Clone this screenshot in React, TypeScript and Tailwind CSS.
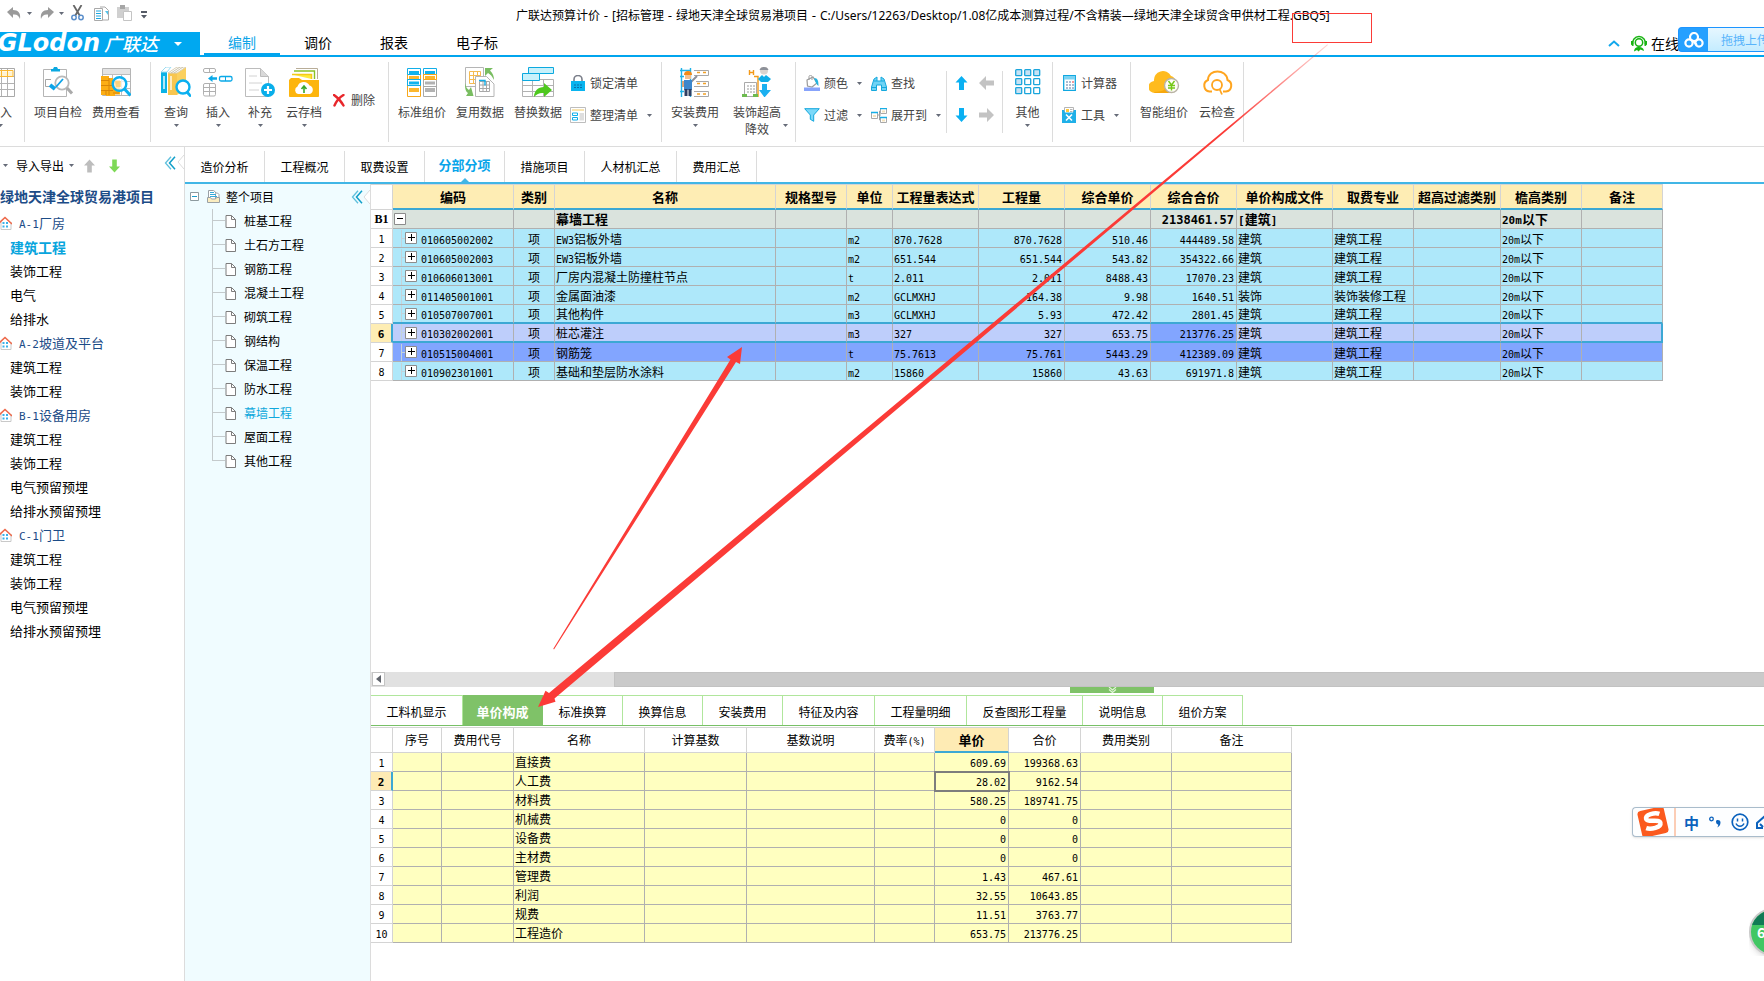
import React from "react";

const MONO = "font-['DejaVu_Sans_Mono',monospace]";

/* ---------- helpers ---------- */

/** Sets runs of Latin characters in a half-width face next to the Chinese text. */
function Mix({ text, size = "text-[10px]" }: { text: string; size?: string }) {
  return (
    <>
      {text.split(/([\x20-\x7e]+)/).map((part, i) =>
        part === "" ? null : i % 2 ? (
          <span key={i} className={`${MONO} ${size} leading-none`}>{part}</span>
        ) : (
          <React.Fragment key={i}>{part}</React.Fragment>
        )
      )}
    </>
  );
}

function Svg({ w = 30, h = 30, children }: { w?: number; h?: number; children: React.ReactNode }) {
  return (
    <svg width={w} height={h} viewBox={`0 0 ${w} ${h}`} fill="none" className="block shrink-0" aria-hidden="true">
      {children}
    </svg>
  );
}

const Caret = ({ color = "#666b78" }: { color?: string }) => (
  <Svg w={5} h={3}><path d="M0 0h5L2.500 3z" fill={color} /></Svg>
);

/* ---------- small icons ---------- */

const Undo = () => (
  <Svg w={14} h={13}><path d="M0 5L6 0v3c5 0 8 3 7 9-1-3-3-5-7-4.500V11z" fill="#9a9a9a" /></Svg>
);
const Redo = () => (
  <Svg w={14} h={13}><path d="M14 5L8 0v3C3 3 0 6 1 12c1-3 3-5 7-4.500V11z" fill="#9a9a9a" /></Svg>
);
const Scissors = () => (
  <Svg w={13} h={16}>
    <path d="M2.500 0L9 11M10.500 0L4 11" stroke="#666" strokeWidth="1.800" />
    <circle cx="3" cy="12.500" r="2.200" stroke="#5b8fcb" strokeWidth="1.500" />
    <circle cx="10" cy="12.500" r="2.200" stroke="#5b8fcb" strokeWidth="1.500" />
  </Svg>
);
const CopyIcon = () => (
  <Svg w={15} h={15}>
    <path d="M6 1h5l3.500 3.500V14H9" fill="#fff" stroke="#a9a9a9" />
    <path d="M11 5h3v4z" fill="#55c3ea" />
    <path d="M.5 2.500h8v12h-8z" fill="#fff" stroke="#a9a9a9" />
    <path d="M2 5h5M2 7.500h5M2 10h5M2 12.500h5" stroke="#1ea7e0" />
  </Svg>
);
const PasteIcon = () => (
  <Svg w={15} h={16}>
    <path d="M0 2h12v11H0z" fill="#d0d0d0" />
    <path d="M3 0h5v4H3z" fill="#a6a6a6" />
    <path d="M6.500 6.500h8v9h-8z" fill="#fff" stroke="#c4c4c4" />
  </Svg>
);
const MoreBar = () => (
  <Svg w={6} h={8}><path d="M0 0h6v2H0zM0 4h6L3 7.500z" fill="#555b66" /></Svg>
);
const DoubleLeft = () => (
  <Svg w={12} h={14}>
    <path d="M7 .8L1.500 7 7 13.200" stroke="#5fc0dd" strokeWidth="1.300" />
    <path d="M11 .8L5.500 7 11 13.200" stroke="#109fc9" strokeWidth="1.500" />
  </Svg>
);
const Notch = ({ fill }: { fill: string }) => (
  <Svg w={7} h={14}><path d="M7 0L1 7l6 7z" fill={fill} /><path d="M7 0L1 7l6 7" stroke="#dcdcdc" /></Svg>
);
const ArrowV = ({ color, down = false, w = 11 }: { color: string; down?: boolean; w?: number }) => (
  <svg width={w} height={14} viewBox="0 0 12 14" className={`block shrink-0 ${down ? "rotate-180" : ""}`} aria-hidden="true">
    <path d="M6 0l6 6.500H8.500V14h-5V6.500H0z" fill={color} />
  </svg>
);
const ArrowH = ({ right = false }: { right?: boolean }) => (
  <svg width={15} height={14} viewBox="0 0 15 14" className={`block shrink-0 ${right ? "rotate-180" : ""}`} aria-hidden="true">
    <path d="M0 7l7-7v4.500h8v5H7V14z" fill="#c3c3c3" />
  </svg>
);
const House = () => (
  <Svg w={12} h={14}>
    <path d="M1 6v7.500h10V6" stroke="#c9c9c9" fill="#fff" />
    <path d="M-2 8L5 1.500 12 8" stroke="#ee6a4b" strokeWidth="1.600" />
    <path d="M2.500 6h2v2h-2zM6 6h2v2H6zM2.500 9.500h2v2h-2zM6 9.500h2v2H6z" fill="#39b1ea" />
  </Svg>
);
const DocIcon = () => (
  <Svg w={11} h={13}><path d="M1 .5h5.500l4 4v8H1z" fill="#fff" stroke="#7d7d7d" /><path d="M6.500.5v4h4" stroke="#7d7d7d" /></Svg>
);
const ProjectDocs = () => (
  <Svg w={13} h={13}>
    <path d="M1.500 9V.5h5l2 1.500v7" fill="#fff" stroke="#9aa1a6" />
    <path d="M8 3h2.500l1.500 1.500V9" fill="#fff" stroke="#9aa1a6" />
    <path d="M3 2.500h4M3 4.500h6M3 6.500h7" stroke="#35a9d9" />
    <path d="M.5 7.500h3l1 1.500h4l1-1.500h3v5H.5z" fill="#fbedc0" stroke="#9aa1a6" />
  </Svg>
);

const LockIcon = () => (
  <Svg w={16} h={16}>
    <path d="M4 7V4.500a4 4 0 018 0V7" stroke="#7b7f8a" strokeWidth="1.600" />
    <path d="M1 6h14v10H1z" fill="#09b4ef" />
    <path d="M4 10h2M7 10h2M10 10h2M4 12.500h2M7 12.500h2M10 12.500h2" stroke="#0b6ea8" />
  </Svg>
);
const ArrangeIcon = () => (
  <Svg w={16} h={16}>
    <path d="M.5.5h15v15H.5z" fill="#fff" stroke="#bdbdbd" />
    <path d="M2 2h12v2H2z" fill="#f7e3b0" />
    <path d="M2.500 6h5v2.500h-5zM2.500 10.500h5V13h-5z" stroke="#0eaeea" />
    <path d="M9.500 6H14v7.500H9.500z" fill="#dedede" />
  </Svg>
);
const ColorIcon = () => (
  <Svg w={16} h={16}>
    <path d="M3 5l6-3 4 6-5 4-4.500-1z" fill="#fff" stroke="#9b9b9b" strokeWidth="1.200" />
    <path d="M5 5V1.500c0-1.500 3-1.500 3 0V5" stroke="#9b9b9b" />
    <path d="M10 3c4 0 4.500 3 4.500 8-2-1-2-3-3-4z" fill="#24b3df" />
    <path d="M0 12.500h16V16H0z" fill="#87a3fb" />
  </Svg>
);
const FindIcon = () => (
  <Svg w={16} h={15}>
    <path d="M3 3l3-2v4h4V1l3 2 2.500 8v3.500h-5V9h-5v5.500h-5V11z" fill="#6fd3f5" stroke="#15a8dd" />
    <path d="M1 11.500h4M11 11.500h4M3 5h3M10 5h3" stroke="#15a8dd" />
  </Svg>
);
const FilterIcon = () => (
  <Svg w={16} h={14}><path d="M.7.7h14.600L9.700 7v6.300l-3.400-2V7z" fill="#7cd8f8" stroke="#12a7dd" /></Svg>
);
const ExpandIcon = () => (
  <Svg w={16} h={15}>
    <path d="M7 7h3M8.500 3v9M8.500 3H10M8.500 12H10" stroke="#a0a0a0" />
    <path d="M.5 4.500h6v6h-6zM9.500.5h6v5h-6zM9.500 9.500h6v5h-6z" fill="#fff" stroke="#a9a9a9" />
    <path d="M0 4.500h7M9 .5h7M9 9.500h7" stroke="#16aee6" strokeWidth="1.500" />
    <path d="M2 7h3v2H2zM11 2.500h3v2h-3zM11 11.500h3v2h-3z" fill="#f4e2bd" />
  </Svg>
);
const CalcIcon = () => (
  <Svg w={13} h={16}>
    <path d="M.7.7h11.600v14.600H.7z" fill="#fff" stroke="#0fa7e0" strokeWidth="1.300" />
    <path d="M1 1h11v3.500H1z" fill="#7bd3f3" />
    <path d="M3 7h2M6 7h2M3 10h2M6 10h2M9 10h2M3 13h2M6 13h2M9 13h2" stroke="#5578a8" />
    <path d="M9 7h2" stroke="#e33" />
  </Svg>
);
const ToolIcon = () => (
  <Svg w={14} h={16}>
    <path d="M2.500 5V.5h9V5" fill="#fff" stroke="#b5b5b5" />
    <path d="M4 2h3v3H4z" fill="#ffc93c" />
    <path d="M8 2.500h2.500M8 4.500h2.500" stroke="#b5b5b5" />
    <path d="M0 3h2l1 2.500h8L12 3h2v13H0z" fill="#1fb0e8" />
    <path d="M4 7.500l6 6M10 7.500l-6 6" stroke="#fff" strokeWidth="1.600" />
  </Svg>
);
const DeleteIcon = () => (
  <Svg w={12} h={13}><path d="M1 1c3 2 7 6 9.500 10.500M10.500 1C7 3 3.500 7 1.500 11.500" stroke="#e8262b" strokeWidth="2.400" strokeLinecap="round" /></Svg>
);
const Headset = () => (
  <Svg w={16} h={17}>
    <path d="M2.500 12A7 7 0 118 15" stroke="none" />
    <path d="M1.800 9.500a6.400 6.400 0 1112.400 0" stroke="#18b312" strokeWidth="1.400" />
    <path d="M0 6h2.500v5H1.500L0 9.500zM16 6h-2.500v5h1L16 9.500z" fill="#18b312" />
    <circle cx="8" cy="7.500" r="3.700" fill="#fff" stroke="#18b312" strokeWidth="1.500" />
    <path d="M3 16.500c.5-3.500 2-4.500 5-4.500s4.500 1 5 4l-3.500-1.500-2 2-1.500-1.500z" fill="#18b312" />
  </Svg>
);
const CloudDisk = () => (
  <Svg w={20} h={16}>
    <circle cx="10" cy="5" r="4" stroke="#fff" strokeWidth="2.200" />
    <circle cx="5" cy="11" r="3.600" stroke="#fff" strokeWidth="2.200" />
    <circle cx="15" cy="11" r="3.600" stroke="#fff" strokeWidth="2.200" />
    <path d="M8 8l5 5" stroke="#fff" strokeWidth="2" />
  </Svg>
);

/* ---------- ribbon icons ---------- */

const GridIcon = () => (
  <Svg>
    <path d="M.5 1.500h29v28H.5z" fill="#fff" stroke="#a9a9a9" />
    <path d="M2 4.500h26v5H2z" fill="#fff3d2" />
    <path d="M1 9.500h28M1 16.500h28M1 22.500h28M10.500 2v27M16.500 2v27M22.500 2v27" stroke="#b2b2b2" />
    <path d="M10.500 3v6M16.500 3v6M22.500 3v6M4 3.500h24v6H4" stroke="#f9b731" />
  </Svg>
);
const CheckProject = () => (
  <Svg>
    <path d="M.5 2.500h23v27H.5z" fill="#fff" stroke="#b5b5b5" />
    <path d="M8 2h2l1-2h3l1 2h2v2.500H8z" fill="#0aa8e0" />
    <path d="M8 12.500H2.500v7H6" stroke="#a5a5a5" />
    <circle cx="19" cy="16" r="6.700" fill="#fff" stroke="#b9b9b9" strokeWidth="1.800" />
    <path d="M24 21l5 5.500" stroke="#aaa" strokeWidth="3" />
    <path d="M7 18l5 4" stroke="#0ba3e8" strokeWidth="4" />
    <path d="M13 20l7-8" stroke="#0ba3e8" strokeWidth="1.800" />
  </Svg>
);
const FeeView = () => (
  <Svg>
    <path d="M1.500 1.500h28v27h-28z" fill="#fff" stroke="#b5b5b5" />
    <path d="M2 2h27v5H2z" fill="#e4e4e4" />
    <path d="M2 7.500h27M2 14.500h27M2 21.500h27M11.500 7v21M20.500 7v21" stroke="#bdbdbd" />
    <path d="M0 9h8v2h4v2h7v14.500H14V29H5v-1H0z" fill="#fcae14" />
    <path d="M0 13.500h8M0 18.500h12M0 23.500h12M5 28v-4M8 11v17M12 16h6M12 21h6M12 26h6" stroke="#d98606" />
    <circle cx="18.500" cy="17" r="6.800" fill="#fff" fillOpacity=".75" stroke="#0bb0f0" strokeWidth="2.400" />
    <path d="M14 14h6v6h-5z" fill="#fcae14" opacity=".4" />
    <path d="M23.500 22l6 6.500" stroke="#0bb0f0" strokeWidth="3" />
  </Svg>
);
const Books = () => (
  <Svg>
    <path d="M0 5h6v21H0z" fill="#0bb3e6" /><path d="M0 5l5-5h5L6 5z" fill="#fff" stroke="#9bdcf1" />
    <path d="M3 9v13" stroke="#eafaff" strokeWidth="1.500" />
    <path d="M16 6l9-6v22l-9 6z" fill="#fbd05e" />
    <path d="M7 6h9v22H7z" fill="#f8c64f" /><path d="M7 6l9-6h9l-9 6z" fill="#fff" stroke="#d9cfb4" />
    <path d="M10 6l9-6M13 6l9-6" stroke="#c9c2ad" /><path d="M10 9v14" stroke="#fff" strokeWidth="1.300" />
    <circle cx="22" cy="20" r="6.500" fill="#fff" stroke="#0bb0f0" strokeWidth="2.400" />
    <path d="M26 25l4 4.500" stroke="#0bb0f0" strokeWidth="2.800" />
  </Svg>
);
const InsertIcon = () => (
  <Svg>
    <rect x=".5" y="1.500" width="12" height="4" rx="1.500" stroke="#b0b0b0" /><path d="M6.500 1.500v4" stroke="#b0b0b0" />
    <path d="M5 11.500l4.500-3.500v2.200H14v2.600H9.500V15z" fill="#0aa9e8" />
    <rect x="16.500" y="9.500" width="12.500" height="4.500" rx="1.500" stroke="#0aa9e8" strokeWidth="1.300" /><path d="M22.500 9.500V14" stroke="#0aa9e8" />
    <rect x=".5" y="16.500" width="12" height="12.500" rx="1.500" stroke="#b0b0b0" />
    <path d="M6.500 16.500V29M.5 20.500h12M.5 24.500h12" stroke="#b0b0b0" />
  </Svg>
);
const SupplementIcon = () => (
  <Svg>
    <path d="M.5 1.500h15l8 8V29.500H.5z" fill="#fff" stroke="#bcbcbc" />
    <path d="M15.500 1.500v8h8" fill="#d9d9d9" stroke="#bcbcbc" />
    <path d="M4 9h8M4 16h13M4 23h10" stroke="#d2d2d2" />
    <circle cx="23" cy="23" r="7" fill="#09aeea" />
    <path d="M23 19v8M19 23h8" stroke="#fff" strokeWidth="2.200" />
  </Svg>
);
const CloudFolder = () => (
  <Svg>
    <path d="M7 1.500h21.500V12" stroke="#b8ad98" /><path d="M5 4h20.500v8" stroke="#8ac224" strokeWidth="1.400" />
    <path d="M3 7.500h19.500V12" fill="#ffeb3b" stroke="#f4c91a" strokeWidth="1.500" />
    <path d="M0 13l2-2h8l3 2h17v15.500a2 2 0 01-2 2H2a2 2 0 01-2-2z" fill="#fdb50d" />
    <path d="M9 27a4 4 0 01-.5-7.500 6.500 6.500 0 0112-1A4.500 4.500 0 0121 27z" fill="#fff" />
    <path d="M15 26v-6M12.500 22l2.500-3 2.500 3" stroke="#3aa82b" strokeWidth="1.600" />
  </Svg>
);
const StandardPrice = () => (
  <Svg>
    <path d="M.5 7.500h13v22H.5z" stroke="#f7a81c" /><path d="M.5 1.500h13v6H.5z" stroke="#12aee8" />
    <path d="M2 4h10v3H2zM2 14.500h10v3H2z" fill="#10b3ee" /><path d="M2 9h10v3H2zM2 21h10v4H2z" fill="#fcb72d" />
    <path d="M.5 12.500h13v6H.5z" stroke="#12aee8" />
    <path d="M16.500 12.500h13v17h-13zM16.500 19.500h13" stroke="#a8a8a8" />
    <path d="M16.500 1.500h13v6h-13z" stroke="#12aee8" />
    <path d="M16.500 7.500h13v5h-13z" stroke="#f7a81c" />
    <path d="M18 4h10v3H18z" fill="#10b3ee" /><path d="M18 9h10v3H18z" fill="#fcb72d" /><path d="M18 14.500h10v3H18zM18 21h10v4H18z" fill="#b2b2b2" />
  </Svg>
);
const ReuseData = () => (
  <Svg>
    <path d="M.5.5h18v19H.5z" fill="#fff" stroke="#b5b5b5" />
    <path d="M4.500 4.500h11v12h-11zM4.500 8.500h11M4.500 12.500h11M8.500 4v12M12.500 4v12" stroke="#f4bb52" />
    <path d="M10.500 9.500h11l7.500 7.500v12.500H10.500z" fill="#fff" stroke="#b5b5b5" />
    <path d="M14.500 14.500h10v10h-10zM14.500 18h10M14.500 21.500h10M18 14v10M21.500 14v10" stroke="#a8a8a8" />
    <path d="M14 13.500h6v5" stroke="#12aee8" strokeWidth="1.400" />
    <path d="M20 1h8l-3 2.500c3 3 4 6 4 9.500-2-4-3.500-5.500-6-7l-3 3zM0 16c1 4 2 6 4 7l2-3 2.500 9H1l2-3c-3-2-3-6-3-10z" fill="#79bd61" />
  </Svg>
);
const ReplaceData = () => (
  <Svg w={32}>
    <path d="M.5 12.500h31v17H.5zM.5 18.500h31M.5 24.500h31M10.500 12v17M21.500 12v17" fill="#fff" stroke="#b2b2b2" />
    <path d="M6.500.5h25v6h-25z" fill="#c8f1fb" stroke="#0ca9df" />
    <path d="M.5 6.500h17v7H.5z" fill="#c8f1fb" stroke="#0ca9df" />
    <path d="M12 30c0-6 4-10 10-10v-4l8 7-8 7v-4c-4-.5-7 .5-10 4z" fill="#4fc81f" />
  </Svg>
);
const InstallFee = () => (
  <Svg>
    <path d="M1.500 1v29M10.500 1v29M0 3.500h11M0 9.500h4M0 24.500h4" stroke="#1eb2e8" strokeWidth="1.400" />
    <path d="M14 3.500h14.500v5H14M16 14.500h12.500v5H14M14 24.500h14.500v5H14" stroke="#a8a8a8" />
    <path d="M17 5.500h3M23 5.500h3M17 16.500h3M23 16.500h3M17 27h3M23 27h3" stroke="#f2a127" strokeWidth="1.300" />
    <path d="M4 8a4 4 0 018 0z" fill="#f28a18" /><path d="M5 8h6v4H5z" fill="#f4c08e" />
    <path d="M11 15l6-6" stroke="#8d9199" strokeWidth="2" />
    <path d="M4 13h8v10H4z" fill="#3c87cc" /><path d="M4.500 22h3v7h-3zM8.500 22h3v7h-3z" fill="#2f3e62" /><path d="M3 14v6" stroke="#d9a47a" strokeWidth="2" />
  </Svg>
);
const DecorFee = () => (
  <Svg>
    <path d="M7.500 3v5M11.500 3v5M7.500 5.500h4M12 9.500h4V31" stroke="#f39a19" strokeWidth="1.400" />
    <path d="M2.500 15.500h12v14h-12z" fill="#fff" stroke="#a9a9a9" />
    <path d="M5 19h8M5 22h8M5 25h8" stroke="#9a9a9a" strokeDasharray="2 1" />
    <path d="M0 27h5v3H0zM11 27h5v3h-5z" fill="#6dbb4f" />
    <circle cx="22" cy="3.500" r="4" fill="#ddd5cf" /><path d="M17.500 3c1-4 8-4 9 0z" fill="#8d9199" />
    <path d="M16 12l4-4 2 2 2-2 5 4-3 3h-7z" fill="#11aee8" /><path d="M20 17h5v6h4l-6.500 7.500L17 23h3z" fill="#1bb0f0" />
  </Svg>
);
const OtherIcon = () => (
  <Svg w={26} h={26}>
    {[0, 9, 18].map((y, r) =>
      [0, 9, 18].map((x, c) => (
        <rect key={`${x}-${y}`} x={x + 0.7} y={y + 0.7} width="6" height="6" rx=".8" stroke="#1ba6dc" strokeWidth="1.300" fill={r === 0 || c === 0 ? "#c7e2f4" : "#fff"} />
      ))
    )}
  </Svg>
);
const SmartPrice = () => (
  <Svg w={31}>
    <path d="M6 26a6 6 0 01-1-12A9 9 0 0122 9c4 1 5 5 5 8l-5 9z" fill="#ffbb1e" />
    <path d="M5 25c10 0 14-4 17-10v11H6z" fill="#f7a70c" />
    <circle cx="22.500" cy="18.500" r="7" fill="#fffdf6" stroke="#b9b3a4" strokeWidth="1.400" />
    <path d="M19.500 14l3 4 3-4M22.500 18v5.500M19 18.500h7M19 21h7" stroke="#76c817" strokeWidth="1.400" />
  </Svg>
);
const CloudCheck = () => (
  <Svg w={31}>
    <path d="M10 24.500H7.500A6 6 0 016 13C6 7 11 4.500 15.500 4.500S25 7 25.500 13A6 6 0 0124 24.500h-3" stroke="#ffa51f" strokeWidth="2" />
    <circle cx="15" cy="18" r="5" stroke="#ffa51f" strokeWidth="1.800" />
    <path d="M17.500 22l2.500 5.500" stroke="#ffa51f" strokeWidth="1.800" />
  </Svg>
);

/* ---------- ribbon ---------- */

function BigButton({ icon, label, width = "w-[58px]", caret = false }: { icon: React.ReactNode; label: string; width?: string; caret?: boolean }) {
  return (
    <button type="button" className={`flex shrink-0 flex-col items-center pt-[5px] ${width}`}>
      <span className="flex h-[30px] items-center">{icon}</span>
      <span className="mt-[7px] whitespace-nowrap leading-4">{label}</span>
      {caret && <span className="mt-1"><Caret /></span>}
    </button>
  );
}

function SmallButton({ icon, label, caret = false }: { icon: React.ReactNode; label: string; caret?: boolean }) {
  return (
    <button type="button" className="flex h-8 items-center whitespace-nowrap">
      <span className="mr-1 flex w-4 justify-center">{icon}</span>
      {label}
      {caret && <span className="ml-[9px]"><Caret /></span>}
    </button>
  );
}

function Group({ className = "", short = false, children }: { className?: string; short?: boolean; children: React.ReactNode }) {
  return (
    <div className="flex shrink-0">
      <div className={`flex items-start ${className}`}>{children}</div>
      <div className={`w-px bg-[#dcdcdc] ${short ? "my-[9px]" : ""}`} />
    </div>
  );
}

function Ribbon() {
  return (
    <div className="flex h-[90px] overflow-hidden border-b border-[#dcdcdc] pb-1 pt-[5px] text-[12px] text-[#444]">
      <Group className="w-6 justify-end">
        <div className="flex w-6 justify-end overflow-hidden pr-[9px]">
          <BigButton icon={<GridIcon />} label="导入" width="w-[30px]" caret />
        </div>
      </Group>
      <Group className="w-[125px] pl-1">
        <BigButton icon={<CheckProject />} label="项目自检" />
        <BigButton icon={<FeeView />} label="费用查看" />
      </Group>
      <Group className="w-[237px] pl-1">
        <BigButton icon={<Books />} label="查询" width="w-[42px]" caret />
        <BigButton icon={<InsertIcon />} label="插入" width="w-[42px]" caret />
        <BigButton icon={<SupplementIcon />} label="补充" width="w-[42px]" caret />
        <BigButton icon={<CloudFolder />} label="云存档" width="w-[46px]" caret />
        <div className="flex h-[76px] items-center pl-1">
          <SmallButton icon={<DeleteIcon />} label="删除" />
        </div>
      </Group>
      <Group className="w-[272px] pl-1">
        <BigButton icon={<StandardPrice />} label="标准组价" />
        <BigButton icon={<ReuseData />} label="复用数据" />
        <BigButton icon={<ReplaceData />} label="替换数据" />
        <div className="pl-[3px] pt-[5px]">
          <SmallButton icon={<LockIcon />} label="锁定清单" />
          <SmallButton icon={<ArrangeIcon />} label="整理清单" caret />
        </div>
      </Group>
      <Group className="w-[133px] pl-[2px]">
        <BigButton icon={<InstallFee />} label="安装费用" width="w-[62px]" caret />
        <button type="button" className="flex w-[62px] flex-col items-center pt-[5px]">
          <span className="flex h-[30px] items-center"><DecorFee /></span>
          <span className="mt-[7px] leading-4">装饰超高</span>
          <span className="grid w-full grid-cols-[1fr_auto_1fr] leading-[17px]">
            <span />
            <span>降效</span>
            <span className="flex justify-end pt-1"><Caret /></span>
          </span>
        </button>
      </Group>
      <Group className="w-[150px] justify-between pl-2 pr-[5px]" short>
        <div className="pt-[5px]">
          <SmallButton icon={<ColorIcon />} label="颜色" caret />
          <SmallButton icon={<FilterIcon />} label="过滤" caret />
        </div>
        <div className="pt-[5px]">
          <SmallButton icon={<FindIcon />} label="查找" />
          <SmallButton icon={<ExpandIcon />} label="展开到" caret />
        </div>
      </Group>
      <Group className="w-[55px] px-2 pt-[5px]" short>
        <div className="grid grid-cols-[24px_15px] text-left">
          <button type="button" aria-label="上移" className="flex h-8 items-center"><ArrowV color="#0ab0f2" w={13} /></button>
          <button type="button" aria-label="升级" className="flex h-8 items-center"><ArrowH /></button>
          <button type="button" aria-label="下移" className="flex h-8 items-center"><ArrowV color="#0ab0f2" down w={13} /></button>
          <button type="button" aria-label="降级" className="flex h-8 items-center"><ArrowH right /></button>
        </div>
      </Group>
      <Group className="w-[49px]">
        <BigButton icon={<OtherIcon />} label="其他" width="w-[49px]" caret />
      </Group>
      <Group className="w-[77px] pl-2 pt-[5px]">
        <div>
          <SmallButton icon={<CalcIcon />} label="计算器" />
          <SmallButton icon={<ToolIcon />} label="工具" caret />
        </div>
      </Group>
      <Group className="w-[112px] pl-1">
        <BigButton icon={<SmartPrice />} label="智能组价" />
        <BigButton icon={<CloudCheck />} label="云检查" width="w-12" />
      </Group>
    </div>
  );
}

/* ---------- top bars ---------- */

const titleParts = ["广联达预算计价", "[招标管理", "绿地天津全球贸易港项目", "C:/Users/12263/Desktop/1.08亿成本测算过程/不含精装—绿地天津全球贸含甲供材工程.GBQ5]"];

function TitleBar() {
  return (
    <header className="flex h-8 items-center">
      <div className="flex w-[516px] shrink-0 items-center pb-[6px] pl-[7px]">
        <button type="button" aria-label="撤销" className="mr-[6px]"><Undo /></button>
        <Caret />
        <button type="button" aria-label="恢复" className="ml-2 mr-[5px]"><Redo /></button>
        <Caret />
        <button type="button" aria-label="剪切" className="ml-[7px]"><Scissors /></button>
        <button type="button" aria-label="复制" className="ml-2.5"><CopyIcon /></button>
        <button type="button" aria-label="粘贴" className="ml-2"><PasteIcon /></button>
        <button type="button" aria-label="更多" className="ml-[9px] mt-1"><MoreBar /></button>
      </div>
      <h1 className="whitespace-nowrap font-['Noto_Sans','Noto_Sans_CJK_SC',sans-serif] text-[12px] text-black">
        {titleParts.map((p, i) => (
          <React.Fragment key={p}>
            {i > 0 && <span className="font-['DejaVu_Sans',sans-serif] leading-none">{" - "}</span>}
            {p}
          </React.Fragment>
        ))}
      </h1>
    </header>
  );
}

function MenuBar() {
  const menus = ["调价", "报表"];
  return (
    <nav className="flex h-[25px] border-b-2 border-[#00a5ee] text-[14px] text-black">
      <button type="button" className="flex w-[200px] shrink-0 items-center overflow-hidden bg-[#00a8f0] text-white">
        <span className="flex w-[100px] shrink-0 justify-end font-['DejaVu_Sans',sans-serif] text-[24px] font-bold italic leading-[23px]">GLodon</span>
        <span className="ml-1 whitespace-nowrap text-[18px] font-medium italic leading-[23px]">广联达</span>
        <span className="ml-4">
          <Svg w={8} h={4}><path d="M0 0h8L4 4z" fill="#fff" /></Svg>
        </span>
      </button>
      <button type="button" className="ml-1 w-[76px] border-b-2 border-[#00a5ee] leading-[21px] text-[#0da5e8]">编制</button>
      {menus.map((m) => (
        <button key={m} type="button" className="w-[76px] border-b-2 border-transparent leading-[21px]">{m}</button>
      ))}
      <button type="button" className="w-[90px] border-b-2 border-transparent leading-[21px]">电子标</button>
      <div className="ml-auto flex shrink-0 items-center">
        <button type="button" aria-label="收起功能区" className="mr-[11px]">
          <Svg w={12} h={7}><path d="M1 6l5-4.500L11 6" stroke="#12a8ec" strokeWidth="2" /></Svg>
        </button>
        <Headset />
        <span className="ml-1 w-[27px] whitespace-nowrap leading-[25px]">在线</span>
        <button type="button" className="relative -mt-2 flex h-[25px] w-[86px] items-stretch overflow-hidden rounded-l border border-r-0 border-[#1d95ff] bg-[#25a0ff] text-[12px] text-[#58b4fb]">
          <span className="flex w-[29px] shrink-0 items-center justify-center"><CloudDisk /></span>
          <span className="flex-1 whitespace-nowrap bg-gradient-to-b from-[#e6f7ff] to-[#c4ecff] pl-[13px] text-left leading-[24px]">拖拽上传</span>
        </button>
      </div>
    </nav>
  );
}

/* ---------- side panels ---------- */

const projectTree = [
  { name: "A-1厂房", items: ["建筑工程", "装饰工程", "电气", "给排水"] },
  { name: "A-2坡道及平台", items: ["建筑工程", "装饰工程"] },
  { name: "B-1设备用房", items: ["建筑工程", "装饰工程", "电气预留预埋", "给排水预留预埋"] },
  { name: "C-1门卫", items: ["建筑工程", "装饰工程", "电气预留预埋", "给排水预留预埋"] },
];

function ProjectPanel() {
  return (
    <aside className="w-[185px] shrink-0 border-r border-[#dcdcdc] text-[13px] text-black">
      <div className="flex h-[37px] items-center pl-[3px] text-[12px]">
        <Caret />
        <button type="button" className="ml-2 mr-[5px] whitespace-nowrap">导入导出</button>
        <Caret />
        <button type="button" aria-label="上移" className="ml-2.5"><ArrowV color="#bdbdbd" /></button>
        <button type="button" aria-label="下移" className="ml-[14px]"><ArrowV color="#7ed957" down /></button>
        <button type="button" aria-label="收起" className="ml-auto mr-px pb-[6px]"><DoubleLeft /></button>
        <span className="pb-2"><Notch fill="#fff" /></span>
      </div>
      <h2 className="mb-[3px] h-6 overflow-hidden whitespace-nowrap text-[14px] font-bold leading-6 text-[#1c4c87]">绿地天津全球贸易港项目</h2>
      <ul>
        {projectTree.map((b, bi) => (
          <li key={b.name}>
            <button type="button" className="flex h-6 items-center text-[#1c4c87]">
              <House />
              <span className="ml-[7px]"><Mix text={b.name} size="text-[11px]" /></span>
            </button>
            <ul>
              {b.items.map((n, i) => (
                <li key={n}>
                  <button type="button" className={`block h-6 pl-2.5 leading-6 ${bi === 0 && i === 0 ? "text-[14px] font-bold text-[#08a5dd]" : ""}`}>{n}</button>
                </li>
              ))}
            </ul>
          </li>
        ))}
      </ul>
    </aside>
  );
}

const sections = ["桩基工程", "土石方工程", "钢筋工程", "混凝土工程", "砌筑工程", "钢结构", "保温工程", "防水工程", "幕墙工程", "屋面工程", "其他工程"];

function SectionPanel() {
  return (
    <aside className="w-[186px] shrink-0 border-r border-[#dcdcdc] bg-[#f0fcff] text-[12px] text-black">
      <div className="flex h-[25px] items-center pl-[5px]">
        <Svg w={9} h={9}><path d="M.5.5h8v8h-8z" fill="#fff" stroke="#8d9a9f" /><path d="M2 4.500h5" stroke="#1a9bc9" /></Svg>
        <span className="ml-2 mr-[6px]"><ProjectDocs /></span>
        整个项目
        <button type="button" aria-label="收起" className="ml-auto"><DoubleLeft /></button>
        <Notch fill="#fff" />
      </div>
      <ul>
        {sections.map((s, i) => (
          <li key={s} className="flex h-6 items-center pl-[27px]">
            <span className="flex h-6 w-[13px] flex-col">
              <span className="h-3 border-b border-l border-[#c4cacc]" />
              {i < sections.length - 1 && <span className="h-3 border-l border-[#c4cacc]" />}
            </span>
            <DocIcon />
            <button type="button" className={`ml-2 ${s === "幕墙工程" ? "text-[#10a8dc]" : ""}`}>{s}</button>
          </li>
        ))}
      </ul>
    </aside>
  );
}

/* ---------- bill table ---------- */

const billCols = [
  { t: "", w: 22 }, { t: "编码", w: 121 }, { t: "类别", w: 41 }, { t: "名称", w: 221 }, { t: "规格型号", w: 71 },
  { t: "单位", w: 46 }, { t: "工程量表达式", w: 86 }, { t: "工程量", w: 86 }, { t: "综合单价", w: 86 }, { t: "综合合价", w: 86 },
  { t: "单价构成文件", w: 96 }, { t: "取费专业", w: 81 }, { t: "超高过滤类别", w: 87 }, { t: "檐高类别", w: 81 }, { t: "备注", w: 81 },
];

const billRows = [
  ["010605002002", "项", "EW3铝板外墙", "", "m2", "870.7628", "870.7628", "510.46", "444489.58", "建筑", "建筑工程", "", "20m以下", ""],
  ["010605002003", "项", "EW3铝板外墙", "", "m2", "651.544", "651.544", "543.82", "354322.66", "建筑", "建筑工程", "", "20m以下", ""],
  ["010606013001", "项", "厂房内混凝土防撞柱节点", "", "t", "2.011", "2.011", "8488.43", "17070.23", "建筑", "建筑工程", "", "20m以下", ""],
  ["011405001001", "项", "金属面油漆", "", "m2", "GCLMXHJ", "164.38", "9.98", "1640.51", "装饰", "装饰装修工程", "", "20m以下", ""],
  ["010507007001", "项", "其他构件", "", "m3", "GCLMXHJ", "5.93", "472.42", "2801.45", "建筑", "建筑工程", "", "20m以下", ""],
  ["010302002001", "项", "桩芯灌注", "", "m3", "327", "327", "653.75", "213776.25", "建筑", "建筑工程", "", "20m以下", ""],
  ["010515004001", "项", "钢筋笼", "", "t", "75.7613", "75.761", "5443.29", "412389.09", "建筑", "建筑工程", "", "20m以下", ""],
  ["010902301001", "项", "基础和垫层防水涂料", "", "m2", "15860", "15860", "43.63", "691971.8", "建筑", "建筑工程", "", "20m以下", ""],
];

const groupRow = ["", "", "幕墙工程", "", "", "", "", "", "2138461.57", "[建筑]", "", "", "20m以下", ""];

const align = (c: number) => (c === 1 ? "text-center" : c >= 6 && c <= 8 ? "pr-[2px] text-right" : "pl-px text-left");

const Toggle = ({ open = false }: { open?: boolean }) => (
  <Svg w={12} h={12}>
    <path d="M.5.5h11v11H.5z" fill="#fff" stroke="#8c8c8c" />
    <path d={open ? "M3 5.500h6" : "M3 5.500h7M6.500 2v7"} stroke="#000" />
  </Svg>
);

function BillTable() {
  return (
    <table className="w-[1292px] table-fixed border-separate border-spacing-0 text-[12px] leading-[18px] text-black">
      <colgroup>{billCols.map((c, i) => <col key={i} style={{ width: c.w }} />)}</colgroup>
      <thead>
        <tr className="h-[26px]">
          {billCols.map((c, i) => (
            <th
              key={i}
              className={`whitespace-nowrap border-r border-t border-[#d4d4d4] p-0 text-[13px] font-bold ${i === 0 ? "border-b" : "border-b-2 border-b-[#3ca8d4] bg-[#feedb4]"}`}
            >
              {c.t}
            </th>
          ))}
        </tr>
      </thead>
      <tbody>
        <tr className="h-[19px] bg-[#dae3dd] font-bold">
          <th className="border-b border-r border-[#d4d4d4] bg-white p-0 font-['Liberation_Serif',serif]">B1</th>
          {groupRow.map((v, c) => (
            <td key={c} className={`whitespace-nowrap border-b border-r border-[#b0b0b0] p-0 text-[13px] ${align(c)}`}>
              {c === 0 ? <Toggle open /> : <Mix text={v} size={c === 8 ? "text-[12px]" : "text-[11px]"} />}
            </td>
          ))}
        </tr>
        {billRows.map((row, r) => {
          const bg = r === 5 ? "bg-[#becefb]" : r === 6 ? "bg-[#82a5ff]" : "bg-[#aee8fa]";
          const edge = r === 4 || r === 5 ? "border-b-2 border-b-[#3ca8d4]" : "border-b border-b-[#b0b0b0]";
          return (
            <tr key={r} className="h-[19px]">
              <th className={`border-b border-[#d4d4d4] p-0 ${r === 5 ? "border-r-2 border-r-[#3ca8d4] bg-[#feedb4] font-bold" : "border-r font-normal"}`}>
                <Mix text={String(r + 1)} size={r === 5 ? "text-[11px]" : "text-[10px]"} />
              </th>
              {row.map((v, c) => (
                <td
                  key={c}
                  className={`overflow-hidden whitespace-nowrap p-0 leading-[17px] ${align(c)} ${edge} ${r === 5 && c === 13 ? "border-r-2 border-r-[#3ca8d4]" : "border-r border-r-[#b0b0b0]"} ${r === 5 && c === 8 ? "bg-[#82a5ff]" : bg}`}
                >
                  {c === 0 ? (
                    <span className="flex items-center">
                      <span className="flex h-[17px] w-[11px] shrink-0 items-center pl-[7px]">
                        <span className="h-full w-px bg-[#c3d3da]" />
                        <span className="h-px flex-1 bg-[#c3d3da]" />
                      </span>
                      <Toggle />
                      <span className="ml-1"><Mix text={v} /></span>
                    </span>
                  ) : (
                    <Mix text={v} />
                  )}
                </td>
              ))}
            </tr>
          );
        })}
      </tbody>
    </table>
  );
}

/* ---------- price composition ---------- */

const priceCols = [
  { t: "", w: 22 }, { t: "序号", w: 49 }, { t: "费用代号", w: 72 }, { t: "名称", w: 131 }, { t: "计算基数", w: 102 },
  { t: "基数说明", w: 128 }, { t: "费率(%)", w: 60 }, { t: "单价", w: 74 }, { t: "合价", w: 72 }, { t: "费用类别", w: 91 }, { t: "备注", w: 120 },
];

const priceRows = [
  ["直接费", "609.69", "199368.63"], ["人工费", "28.02", "9162.54"], ["材料费", "580.25", "189741.75"],
  ["机械费", "0", "0"], ["设备费", "0", "0"], ["主材费", "0", "0"], ["管理费", "1.43", "467.61"],
  ["利润", "32.55", "10643.85"], ["规费", "11.51", "3763.77"], ["工程造价", "653.75", "213776.25"],
];

function PriceTable() {
  return (
    <table className="w-[921px] table-fixed border-separate border-spacing-0 text-[12px] leading-[18px] text-black">
      <colgroup>{priceCols.map((c, i) => <col key={i} style={{ width: c.w }} />)}</colgroup>
      <thead>
        <tr className="h-[26px]">
          {priceCols.map((c, i) => (
            <th
              key={i}
              className={`whitespace-nowrap border-r border-t border-[#d4d4d4] p-0 ${i === 7 ? "border-b-2 border-b-[#3ca8d4] bg-[#feebb4] text-[13px] font-bold" : "border-b font-normal"}`}
            >
              <Mix text={c.t} />
            </th>
          ))}
        </tr>
      </thead>
      <tbody>
        {priceRows.map(([name, unit, total], r) => (
          <tr key={name} className="h-[19px]">
            <th className={`border-b border-[#d4d4d4] p-0 ${r === 1 ? "border-r-2 border-r-[#3ca8d4] bg-[#feebb4] font-bold" : "border-r font-normal"}`}>
              <Mix text={String(r + 1)} size={r === 1 ? "text-[11px]" : "text-[10px]"} />
            </th>
            {["", "", name, "", "", "", unit, total, "", ""].map((v, c) => (
              <td
                key={c}
                className={`whitespace-nowrap border-b border-r border-[#b0b0b0] bg-[#ffffc0] p-0 ${c === 6 || c === 7 ? "pr-[2px] text-right" : "pl-px"} ${c === 6 && r === 1 ? "outline-2 -outline-offset-1 outline-[#7d7d7d]" : ""}`}
              >
                <Mix text={v} />
              </td>
            ))}
          </tr>
        ))}
      </tbody>
    </table>
  );
}

const viewTabs = [
  { t: "造价分析", w: "w-20" }, { t: "工程概况", w: "w-20" }, { t: "取费设置", w: "w-20" }, { t: "分部分项", w: "w-20" },
  { t: "措施项目", w: "w-20" }, { t: "人材机汇总", w: "w-[92px]" }, { t: "费用汇总", w: "w-20" },
];

const detailTabs = [
  { t: "工料机显示", w: "w-[92px]" }, { t: "单价构成", w: "w-20" }, { t: "标准换算", w: "w-20" }, { t: "换算信息", w: "w-20" },
  { t: "安装费用", w: "w-20" }, { t: "特征及内容", w: "w-[92px]" }, { t: "工程量明细", w: "w-[92px]" },
  { t: "反查图形工程量", w: "w-[116px]" }, { t: "说明信息", w: "w-20" }, { t: "组价方案", w: "w-20" },
];

function ViewTabs() {
  return (
    <div role="tablist" className="flex h-[37px] border-b-2 border-[#41b6e6] pt-1 text-[12px] text-black">
      {viewTabs.map(({ t, w }) => {
        const on = t === "分部分项";
        return (
          <button
            key={t}
            type="button"
            role="tab"
            aria-selected={on}
            className={`${w} flex shrink-0 flex-col items-center border-r border-[#dcdcdc] leading-[27px] ${on ? "text-[13px] font-bold text-[#08a5ea]" : "pt-[2px]"}`}
          >
            {t}
            {on && <Svg w={8} h={4}><path d="M0 4l4-4 4 4z" fill="#41b6e6" /></Svg>}
          </button>
        );
      })}
    </div>
  );
}

function DetailPanel() {
  return (
    <section className="pb-[38px]">
      <div className="flex h-[15px] bg-[#e1e1e1]">
        <button type="button" aria-label="向左滚动" className="ml-px flex h-[14px] w-[13px] items-center justify-center border border-[#c4c4c4] bg-white">
          <Svg w={5} h={8}><path d="M5 0v8L0 4z" fill="#60646c" /></Svg>
        </button>
        <div className="ml-[229px] flex-1 border border-r-0 border-[#c2c2c2] bg-[#cacaca]" />
      </div>
      <button type="button" aria-label="收起明细" className="ml-[699px] flex h-[6px] w-[84px] justify-center bg-[#7fc268]">
        <Svg w={9} h={6}><path d="M1 0l3.500 3L8 0M1 2.500l3.500 3 3.500-3" stroke="#dff5d6" strokeWidth="1.200" /></Svg>
      </button>
      <div role="tablist" className="mt-[2px] flex h-[31px] border-b border-[#78c067] text-[12px] text-black">
        {detailTabs.map(({ t, w }) => {
          const on = t === "单价构成";
          return (
            <button
              key={t}
              type="button"
              role="tab"
              aria-selected={on}
              className={`${w} shrink-0 whitespace-nowrap border-r border-t leading-8 ${on ? "border-[#7fc268] bg-[#7fc268] pb-1 text-[13px] font-bold text-white" : "border-[#b0e69c]"}`}
            >
              {t}
            </button>
          );
        })}
      </div>
      <div className="overflow-hidden pt-px"><PriceTable /></div>
    </section>
  );
}

/* ---------- floating items ---------- */

function Annotations() {
  return (
    <svg width="1764" height="720" viewBox="0 0 1764 720" fill="none" className="pointer-events-none absolute left-0 top-0" aria-hidden="true">
      <defs>
        <linearGradient id="fade" gradientUnits="userSpaceOnUse" x1="1328" y1="45" x2="1230" y2="126">
          <stop offset="0" stopColor="#fb3b37" stopOpacity=".2" />
          <stop offset="1" stopColor="#fb3b37" />
        </linearGradient>
      </defs>
      <rect x="1292.500" y="13.500" width="79" height="29" stroke="#fb3b37" />
      <path d="M1328 45L554.500 698.500 555.500 701.700 538 707 545.500 690.700 549 693 1327.300 44.300z" fill="url(#fade)" />
      <path d="M554 649.500L553.300 648.700 730.500 359.500 727 357l15-10-2 17-4-2z" fill="#fb3b37" />
    </svg>
  );
}

function ImeBar() {
  return (
    <div className="absolute right-0 top-[807px] flex h-[30px] w-[132px] items-center overflow-hidden rounded-l border border-r-0 border-[#a9bccb] bg-[#fdfeff] text-[#0b62bd] shadow">
      <span className="ml-[3px]">
        <Svg w={34} h={30}>
          <g transform="rotate(-13 17 15)">
            <rect x="3.500" y="1.500" width="27" height="27" rx="3.500" fill="#fb5a1e" />
            <path d="M25 8.500c-4-2.500-14-2.500-14 1.800 0 4.500 13 2.500 13 7.200 0 5-11 4.500-15 2" stroke="#fff" strokeWidth="4.500" />
          </g>
        </Svg>
      </span>
      <span className="ml-1 h-full w-1 border-x border-[#fbcdb6]" />
      <span className="ml-2 text-[15px] font-bold leading-none">中</span>
      <span className="ml-2.5 flex shrink-0">
        <Svg w={12} h={12}><circle cx="2.500" cy="3" r="1.800" stroke="#0b62bd" strokeWidth="1.300" /><path d="M7 5.500c0-2 4.500-2 4.500 1 0 2.500-1.500 4.500-3.500 5 1-1.200 1.300-2 1.200-3C8 8.500 7 7.500 7 5.500z" fill="#0b62bd" /></Svg>
      </span>
      <span className="ml-2.5 flex shrink-0">
        <Svg w={18} h={18}><circle cx="9" cy="9" r="7.800" stroke="#0b62bd" strokeWidth="1.700" /><path d="M6.500 5.500v3M11.500 5.500v3M5 10.500c1.500 3.500 6.500 3.500 8 0" stroke="#0b62bd" strokeWidth="1.500" /></Svg>
      </span>
      <span className="ml-[7px] flex shrink-0">
        <Svg w={14} h={14}><path d="M9 1L1 8v5h6M4 9l3 3" stroke="#0b62bd" strokeWidth="2" /></Svg>
      </span>
    </div>
  );
}

function SpeedBall() {
  return (
    <div className="absolute right-0 top-[908px] h-12 w-[15px] overflow-hidden">
      <div className="h-12 w-12 overflow-hidden rounded-full border-2 border-[#c9c9c9] bg-[#41c763] shadow-md">
        <div className="h-[15px] bg-[#117a55]" />
        <div className="pl-[6px] text-[14px] font-bold leading-[14px] text-white">6</div>
      </div>
    </div>
  );
}

export default function App() {
  return (
    <div className="relative flex min-h-screen w-full flex-col overflow-hidden bg-white font-['Noto_Sans_CJK_SC',sans-serif]">
      <TitleBar />
      <MenuBar />
      <Ribbon />
      <div className="flex flex-1">
        <ProjectPanel />
        <div className="flex min-w-0 flex-1 flex-col">
          <ViewTabs />
          <div className="flex flex-1">
            <SectionPanel />
            <main className="flex min-w-0 flex-1 flex-col justify-between">
              <div className="overflow-hidden"><BillTable /></div>
              <DetailPanel />
            </main>
          </div>
        </div>
      </div>
      <Annotations />
      <ImeBar />
      <SpeedBall />
    </div>
  );
}
